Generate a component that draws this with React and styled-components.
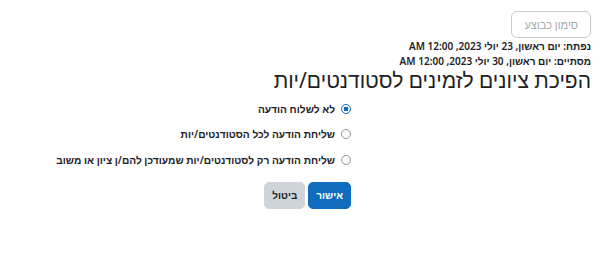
import styled, { createGlobalStyle } from 'styled-components'
import { useState } from 'react'

const GlobalStyle = createGlobalStyle`
  html, body {
    margin: 0;
    padding: 0;
    background: #fff;
  }
  body {
    font-family: "Noto Sans", "Liberation Sans", sans-serif;
    color: #1d2125;
  }
`;

const Page = styled.div`
  direction: rtl;
  display: flex;
  flex-direction: column;
  padding: 11px 5px 0 5px;
`;

const Header = styled.div`
  display: flex;
  flex-direction: column;
  align-items: flex-start;
`;

const DoneButton = styled.button`
  font-family: inherit;
  font-size: 11px;
  color: #a3a9ae;
  background: #fff;
  border: 1px solid #c6cbd0;
  border-radius: 6px;
  height: 27px;
  padding: 0 12px;
  margin-bottom: 1px;
`;

const Dates = styled.div`
  display: flex;
  flex-direction: column;
  font-size: 10px;
  font-weight: 600;
  line-height: 14.5px;
  color: #1d2125;
`;

const Title = styled.h2`
  margin: 0;
  font-size: 21px;
  font-weight: 400;
  line-height: 25px;
  color: #1d2125;
`;

const Form = styled.form`
  display: grid;
  grid-template-columns: 240px 1fr;
  margin-top: 3px;
`;

const Content = styled.div`
  grid-column: 2;
  display: flex;
  flex-direction: column;
`;

const Option = styled.label`
  display: flex;
  align-items: center;
  gap: 6px;
  height: 25.5px;
  font-size: 10.2px;
  font-weight: 600;
  color: #1d2125;
  cursor: pointer;
`;

const Radio = styled.span`
  box-sizing: border-box;
  width: 10px;
  height: 10px;
  border-radius: 50%;
  border: 1px solid ${p => (p.$checked ? '#0f6cbf' : '#8f959e')};
  background: ${p =>
    p.$checked ? 'radial-gradient(circle, #0f6cbf 0 2.2px, #fff 2.6px)' : '#fff'};
  flex-shrink: 0;
`;

const Actions = styled.div`
  display: flex;
  gap: 3px;
  margin-top: 9px;
`;

const Button = styled.button`
  font-family: inherit;
  font-size: 10px;
  font-weight: 700;
  height: 27px;
  padding: 0 7px;
  border-radius: 5px;
  border: 1px solid ${p => (p.$primary ? '#0f6cbf' : '#ced4da')};
  background: ${p => (p.$primary ? '#0f6cbf' : '#ced4da')};
  color: ${p => (p.$primary ? '#fff' : '#1d2125')};
`;

const options = [
  'לא לשלוח הודעה',
  'שליחת הודעה לכל הסטודנטים/יות',
  'שליחת הודעה רק לסטודנטים/יות שמעודכן להם/ן ציון או משוב',
];

export default function App() {
  const [selected, setSelected] = useState(0)

  return (
    <>
      <GlobalStyle />
      <Page>
        <Header>
          <DoneButton>סימון כבוצע</DoneButton>
          <Dates>
            <span>נפתח: יום ראשון, 23 יולי 2023, 12:00 AM</span>
            <span>מסתיים: יום ראשון, 30 יולי 2023, 12:00 AM</span>
          </Dates>
          <Title>הפיכת ציונים לזמינים לסטודנטים/יות</Title>
        </Header>
        <Form onSubmit={e => e.preventDefault()}>
          <Content>
            {options.map((text, i) => (
              <Option key={i} onClick={() => setSelected(i)}>
                <Radio $checked={selected === i} />
                {text}
              </Option>
            ))}
            <Actions>
              <Button $primary>אישור</Button>
              <Button type="button">ביטול</Button>
            </Actions>
          </Content>
        </Form>
      </Page>
    </>
  )
}
